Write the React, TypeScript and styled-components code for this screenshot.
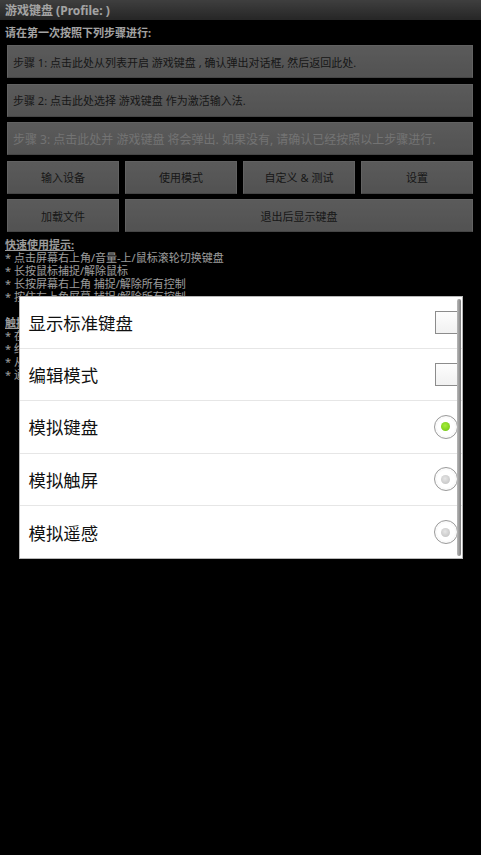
import React from 'react';
import styled, { createGlobalStyle } from 'styled-components';

const GlobalStyle = createGlobalStyle`
  html, body {
    margin: 0;
    padding: 0;
    background: #000;
  }
  body {
    font-family: "Noto Sans", "Noto Sans CJK SC", sans-serif;
  }
`;

const Screen = styled.div`
  position: relative;
  width: 481px;
  height: 855px;
  background: #000;
  overflow: hidden;
`;

const TitleBar = styled.div`
  height: 20px;
  display: flex;
  align-items: center;
  padding: 0 5px;
  background: linear-gradient(#636363, #3c3c3c);
  color: #fff;
  font-size: 12px;
  font-weight: bold;
  white-space: nowrap;
`;

const Body = styled.div`
  display: flex;
  flex-direction: column;
  padding: 5px 8px 0 7px;
`;

const Heading = styled.div`
  height: 16px;
  line-height: 16px;
  margin: 0 0 4px -2px;
  color: #fff;
  font-size: 11px;
  font-weight: bold;
  white-space: nowrap;
`;

const Stack = styled.div`
  display: flex;
  flex-direction: column;
  gap: 5.5px;
`;

const Button = styled.div<{ $align?: 'left' | 'center'; $size?: number; $dim?: boolean }>`
  box-sizing: border-box;
  height: 33px;
  display: flex;
  align-items: center;
  justify-content: ${(p) => (p.$align === 'left' ? 'flex-start' : 'center')};
  padding: 0 5px;
  border: 1px solid #9a9a9a;
  border-bottom-color: #6c6c6c;
  background: linear-gradient(#8e8e8e, #818181);
  color: ${(p) => (p.$dim ? '#b4b4b4' : '#262626')};
  font-size: ${(p) => p.$size ?? 11}px;
  white-space: nowrap;
  overflow: hidden;
`;

const ButtonGrid = styled.div`
  display: grid;
  grid-template-columns: repeat(4, 1fr);
  gap: 5.5px 6px;
`;

const Wide = styled(Button)`
  grid-column: span 3;
`;

const Tips = styled.div`
  margin: 6px 0 0 -2px;
  color: #f2f2f2;
  font-size: 11px;
  line-height: 13px;
  white-space: nowrap;
`;

const TipTitle = styled.div`
  font-weight: bold;
  text-decoration: underline;
`;

const Gap = styled.div`
  height: 13px;
`;

const Scrim = styled.div`
  position: absolute;
  inset: 0;
  display: flex;
  align-items: center;
  justify-content: center;
  background: rgba(0, 0, 0, 0.36);
`;

const Dialog = styled.div`
  position: relative;
  box-sizing: border-box;
  width: 444px;
  background: #fff;
  border: 1px solid #b8b8b8;
`;

const Row = styled.div<{ $last?: boolean }>`
  box-sizing: border-box;
  height: 52.4px;
  display: flex;
  align-items: center;
  justify-content: space-between;
  padding: 0 4px 0 9px;
  border-bottom: ${(p) => (p.$last ? 'none' : '1px solid #e6e6e6')};
`;

const Label = styled.span`
  color: #111;
  font-size: 17.4px;
`;

const CheckBox = styled.span`
  box-sizing: border-box;
  width: 23px;
  height: 23px;
  border: 1px solid #8c8c8c;
  background: linear-gradient(#fdfdfd, #f1f1f1);
`;

const Radio = styled.span`
  box-sizing: border-box;
  width: 24px;
  height: 24px;
  border-radius: 50%;
  display: flex;
  align-items: center;
  justify-content: center;
  border: 1px solid #9a9a9a;
  background: radial-gradient(circle, #fff 55%, #ececec);
  box-shadow: inset 0 0 0 2px #fafafa;
`;

const Dot = styled.span<{ $on?: boolean }>`
  width: 9px;
  height: 9px;
  border-radius: 50%;
  background: ${(p) =>
    p.$on
      ? 'radial-gradient(circle at 45% 40%, #a6ec3a, #6cc20f)'
      : 'radial-gradient(circle at 45% 40%, #e6e6e6, #bdbdbd)'};
`;

const ScrollThumb = styled.div`
  position: absolute;
  top: 2px;
  bottom: 2px;
  right: 1px;
  width: 4px;
  border-radius: 2px;
  background: linear-gradient(90deg, #b9b9b9, #7c7c7c);
`;

const steps = [
  { text: '步骤 1: 点击此处从列表开启 游戏键盘 , 确认弹出对话框, 然后返回此处.', size: 11 },
  { text: '步骤 2: 点击此处选择 游戏键盘 作为激活输入法.', size: 11 },
  { text: '步骤 3: 点击此处并 游戏键盘 将会弹出. 如果没有, 请确认已经按照以上步骤进行.', size: 12, dim: true },
];

const quickTips = [
  '* 点击屏幕右上角/音量-上/鼠标滚轮切换键盘',
  '* 长按鼠标捕捉/解除鼠标',
  '* 长按屏幕右上角 捕捉/解除所有控制',
  '* 按住左上角屏幕 捕捉/解除所有控制',
];

const touchTips = [
  '* 在屏幕上滑动移动鼠标',
  '* 终端双指点击为右键',
  '* 从屏幕边缘滑动打开菜单',
  '* 通过设置调整灵敏度',
];

type Option = { label: string; kind: 'check' | 'radio'; on?: boolean };

const options: Option[] = [
  { label: '显示标准键盘', kind: 'check' },
  { label: '编辑模式', kind: 'check' },
  { label: '模拟键盘', kind: 'radio', on: true },
  { label: '模拟触屏', kind: 'radio' },
  { label: '模拟遥感', kind: 'radio' },
];

export default function App() {
  return (
    <Screen>
      <GlobalStyle />
      <TitleBar>游戏键盘 (Profile: )</TitleBar>
      <Body>
        <Heading>请在第一次按照下列步骤进行:</Heading>
        <Stack>
          {steps.map((s) => (
            <Button key={s.text} $align="left" $size={s.size} $dim={s.dim}>
              {s.text}
            </Button>
          ))}
          <ButtonGrid>
            <Button>输入设备</Button>
            <Button>使用模式</Button>
            <Button>自定义 &amp; 测试</Button>
            <Button>设置</Button>
            <Button>加载文件</Button>
            <Wide>退出后显示键盘</Wide>
          </ButtonGrid>
        </Stack>
        <Tips>
          <TipTitle>快速使用提示:</TipTitle>
          {quickTips.map((t) => (
            <div key={t}>{t}</div>
          ))}
          <Gap />
          <TipTitle>触摸屏模式:</TipTitle>
          {touchTips.map((t) => (
            <div key={t}>{t}</div>
          ))}
        </Tips>
      </Body>

      <Scrim>
        <Dialog>
          {options.map((o, i) => (
            <Row key={o.label} $last={i === options.length - 1}>
              <Label>{o.label}</Label>
              {o.kind === 'check' ? (
                <CheckBox />
              ) : (
                <Radio>
                  <Dot $on={o.on} />
                </Radio>
              )}
            </Row>
          ))}
          <ScrollThumb />
        </Dialog>
      </Scrim>
    </Screen>
  );
}
